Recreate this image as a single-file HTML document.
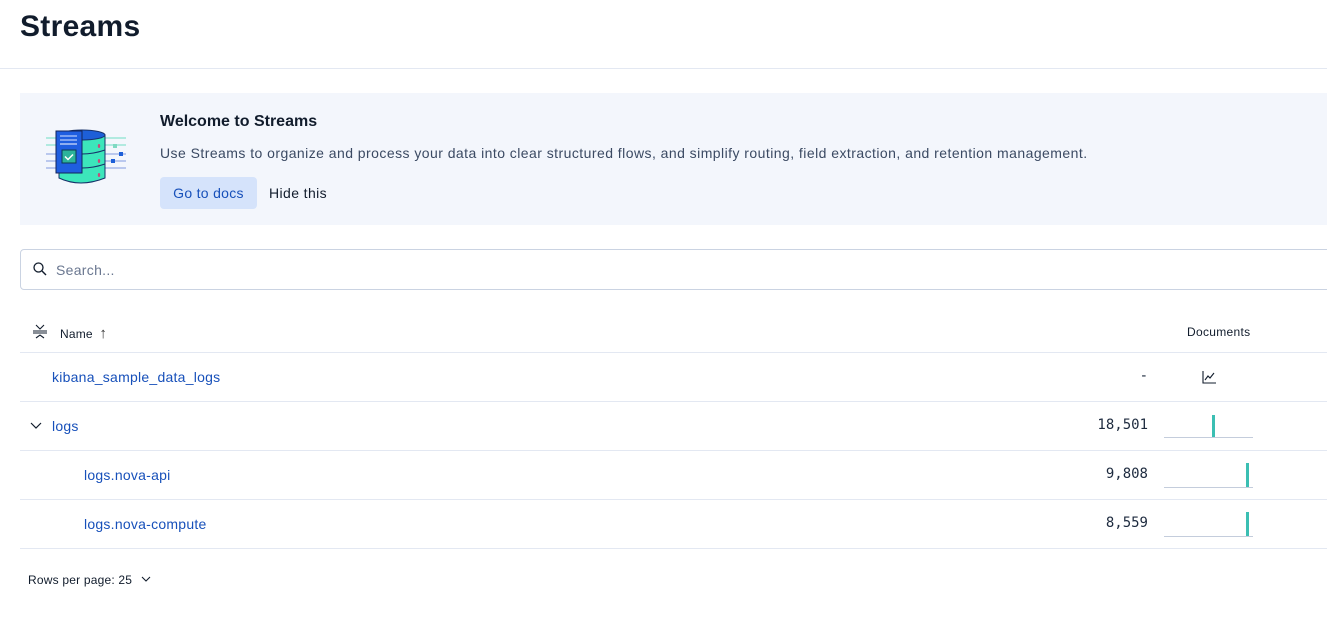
<!DOCTYPE html>
<html><head><style>
body{margin:0;width:1327px;height:617px;overflow:hidden;background:#fff;font-family:"Liberation Sans",sans-serif;color:#1d2a3e;position:relative}
.a{position:absolute}
.link{color:#1750ba;font-size:14px;letter-spacing:0.25px}
.line{position:absolute;left:20px;right:0;height:1px;background:#e3e8f2}
.num{position:absolute;right:179px;font-family:"DejaVu Sans Mono",monospace;font-size:14px;color:#1d2a3e}
.spark{position:absolute;left:1164px;width:89px;height:22px;border-bottom:1px solid #c4cddc}
.spark i{position:absolute;bottom:0;width:3px;height:22px;background:#3bbfb3}
</style></head><body>
<div class="a" style="left:20px;top:10px;font-size:30px;font-weight:bold;color:#111c2c;letter-spacing:0.3px">Streams</div>
<div class="a" style="left:0;right:0;top:68px;height:1px;background:#e3e8f2"></div>
<div class="a" style="left:20px;right:0;top:93px;height:132px;background:#f3f6fc"></div>
<svg class="a" style="left:44px;top:128px" width="84" height="62" viewBox="0 0 84 62">
<line x1="2" y1="10" x2="82" y2="10" stroke="#9be6d6" stroke-width="1.5"/>
<line x1="2" y1="17" x2="82" y2="17" stroke="#9be6d6" stroke-width="1.5"/>
<line x1="2" y1="26" x2="82" y2="26" stroke="#a8b9ea" stroke-width="1.5"/>
<line x1="2" y1="33" x2="82" y2="33" stroke="#a8b9ea" stroke-width="1.5"/>
<line x1="2" y1="40" x2="82" y2="40" stroke="#a8b9ea" stroke-width="1.5"/>
<path d="M15 7 V50 Q36 60 61 50 V7Z" fill="#3ce6bb" stroke="#16316a" stroke-width="1"/>
<ellipse cx="38" cy="7" rx="23" ry="5" fill="#1d5fd8" stroke="#16316a" stroke-width="1"/>
<path d="M15 22 Q38 30 61 22 M15 36 Q38 44 61 36" fill="none" stroke="#16316a" stroke-width="1"/>
<ellipse cx="55" cy="18" rx="1.2" ry="2" fill="#c84b7a"/><ellipse cx="55" cy="33" rx="1.2" ry="2" fill="#c84b7a"/><ellipse cx="55" cy="47" rx="1.2" ry="2" fill="#c84b7a"/>
<rect x="12" y="3" width="26" height="42" fill="#1f5ee0" stroke="#13245a"/>
<line x1="16" y1="8" x2="33" y2="8" stroke="#d8e4ff" stroke-width="1"/>
<line x1="16" y1="12" x2="33" y2="12" stroke="#d8e4ff" stroke-width="1"/>
<line x1="16" y1="16" x2="33" y2="16" stroke="#fff" stroke-width="1"/>
<rect x="18" y="22" width="14" height="13" fill="#2cb39a" stroke="#0c3a52"/>
<path d="M21 28.5 l3 3 l5 -5" stroke="#fff" stroke-width="1.5" fill="none"/>
<rect x="69" y="16" width="4" height="4" fill="#7fd9c2"/><rect x="75" y="24" width="4" height="4" fill="#1d5fd8"/><rect x="67" y="31" width="4" height="4" fill="#1d5fd8"/>
</svg>
<div class="a" style="left:160px;top:113px;font-size:16px;font-weight:bold;color:#111c2c">Welcome to Streams</div>
<div class="a" style="left:160px;top:145px;font-size:14px;color:#3b4a63;letter-spacing:0.45px">Use Streams to organize and process your data into clear structured flows, and simplify routing, field extraction, and retention management.</div>
<div class="a" style="left:160px;top:177px;width:97px;height:32px;background:#d5e3fb;border-radius:4px;color:#1750ba;font-size:14px;line-height:32px;text-align:center;letter-spacing:0.3px">Go to docs</div>
<div class="a" style="left:269px;top:185px;font-size:14px;color:#111c2c;letter-spacing:0.4px">Hide this</div>
<div class="a" style="left:20px;right:-4px;top:249px;height:39px;border:1px solid #cad3e2;border-radius:4px"></div>
<svg class="a" style="left:32px;top:261px" width="16" height="16" viewBox="0 0 16 16"><circle cx="6.5" cy="6.5" r="4.5" fill="none" stroke="#111c2c" stroke-width="1.3"/><path d="M10 10 l4 4" stroke="#111c2c" stroke-width="1.4"/></svg>
<div class="a" style="left:56px;top:262px;font-size:14px;color:#6a7790;letter-spacing:0.3px">Search...</div>
<svg class="a" style="left:32px;top:323px" width="16" height="16" viewBox="0 0 16 16"><path d="M4 2 l4 4 l4 -4 M1 8 h14 M1 10 h14 M4 15 l4 -3 l4 3" fill="none" stroke="#111c2c" stroke-width="1.1"/></svg>
<div class="a" style="left:60px;top:325px;font-size:12px;color:#111c2c;letter-spacing:0.2px">Name <span style="font-size:15px;color:#333;margin-left:3px">↑</span></div>
<div class="a" style="left:1187px;top:325px;font-size:12px;color:#111c2c;letter-spacing:0.3px">Documents</div>
<div class="line" style="top:352px"></div>
<div class="a link" style="left:52px;top:369px">kibana_sample_data_logs</div>
<div class="num" style="top:368px">-</div>
<svg class="a" style="left:1201px;top:369px" width="16" height="16" viewBox="0 0 16 16"><path d="M2 2 V14 H15 M4 11 l3 -4 l2 2 l4 -5" fill="none" stroke="#111c2c" stroke-width="1.1"/></svg>
<div class="line" style="top:401px"></div>
<svg class="a" style="left:29px;top:419px" width="14" height="14" viewBox="0 0 14 14"><path d="M2 4 l5 5 l5 -5" fill="none" stroke="#111c2c" stroke-width="1.2"/></svg>
<div class="a link" style="left:52px;top:418px">logs</div>
<div class="num" style="top:417px">18,501</div>
<div class="spark" style="top:415px"><i style="left:48px"></i></div>
<div class="line" style="top:450px"></div>
<div class="a link" style="left:84px;top:467px">logs.nova-api</div>
<div class="num" style="top:466px">9,808</div>
<div class="spark" style="top:465px"><i style="left:82px;height:24px"></i></div>
<div class="line" style="top:499px"></div>
<div class="a link" style="left:84px;top:516px">logs.nova-compute</div>
<div class="num" style="top:515px">8,559</div>
<div class="spark" style="top:514px"><i style="left:82px;height:24px"></i></div>
<div class="line" style="top:548px"></div>
<div class="a" style="left:28px;top:573px;font-size:12px;color:#111c2c;letter-spacing:0.2px">Rows per page: 25 <svg width="12" height="10" viewBox="0 0 12 10" style="margin-left:4px"><path d="M2 3 l4 4 l4 -4" fill="none" stroke="#111c2c" stroke-width="1.1"/></svg></div>
</body></html>
